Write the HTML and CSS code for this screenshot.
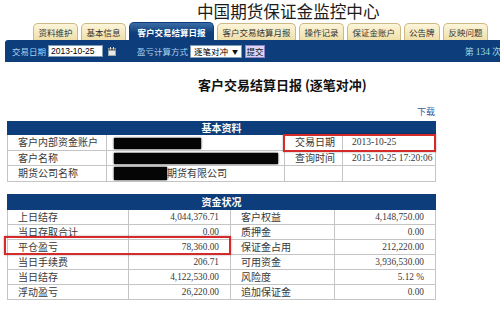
FILE: index.html
```html
<!DOCTYPE html>
<html lang="zh-CN">
<head>
<meta charset="utf-8">
<title>客户交易结算日报</title>
<link rel="stylesheet" href="styles.css">
</head>
<body>
<div class="page">
  <h1 class="site-title">中国期货保证金监控中心</h1>
  <ul class="tabs">
    <li class="tab">资料维护</li>
    <li class="tab">基本信息</li>
    <li class="tab active">客户交易结算日报</li>
    <li class="tab">客户交易结算月报</li>
    <li class="tab">操作记录</li>
    <li class="tab">保证金账户</li>
    <li class="tab">公告牌</li>
    <li class="tab">反映问题</li>
  </ul>
  <div class="toolbar">
    <span class="tb-label">交易日期</span>
    <span class="date-input">2013-10-25</span>
    <svg class="cal-icon" viewBox="0 0 8 9" width="8" height="9">
      <rect x="0.5" y="1.5" width="7" height="7" fill="#e8e8e8" stroke="#9aa" stroke-width="1"/>
      <rect x="0.5" y="1.5" width="7" height="2" fill="#555"/>
      <rect x="2" y="0" width="1" height="2.5" fill="#ddd"/>
      <rect x="5" y="0" width="1" height="2.5" fill="#ddd"/>
    </svg>
    <span class="tb-label mode">盈亏计算方式</span>
    <span class="select">逐笔对冲<span class="arrow">▼</span></span>
    <span class="btn">提交</span>
    <span class="count">第 <span class="num">134</span> 次</span>
  </div>

  <h2 class="report-title">客户交易结算日报 (逐笔对冲)</h2>
  <div class="download-row"><a class="download">下载</a></div>

  <div class="table-wrap first">
    <table class="data basic">
      <colgroup><col class="c1"><col class="c2"><col class="c3"><col class="c4"></colgroup>
      <tr class="head"><th colspan="4">基本资料</th></tr>
      <tr>
        <td class="label">客户内部资金账户</td>
        <td class="value"><span class="redact r1"></span></td>
        <td class="label">交易日期</td>
        <td class="value num">2013-10-25</td>
      </tr>
      <tr>
        <td class="label">客户名称</td>
        <td class="value"><span class="redact r2"></span></td>
        <td class="label">查询时间</td>
        <td class="value num">2013-10-25 17:20:06</td>
      </tr>
      <tr>
        <td class="label">期货公司名称</td>
        <td class="value"><span class="redact r3"></span><span class="cn">期货有限公司</span></td>
        <td class="label"></td>
        <td class="value"></td>
      </tr>
    </table>
    <div class="highlight hl1"></div>
  </div>

  <div class="table-wrap second">
    <table class="data funds">
      <colgroup><col class="d1"><col class="d2"><col class="d3"><col class="d4"></colgroup>
      <tr class="head"><th colspan="4">资金状况</th></tr>
      <tr><td class="label">上日结存</td><td class="amount">4,044,376.71</td><td class="label">客户权益</td><td class="amount">4,148,750.00</td></tr>
      <tr><td class="label">当日存取合计</td><td class="amount">0.00</td><td class="label">质押金</td><td class="amount">0.00</td></tr>
      <tr><td class="label">平仓盈亏</td><td class="amount">78,360.00</td><td class="label">保证金占用</td><td class="amount">212,220.00</td></tr>
      <tr><td class="label">当日手续费</td><td class="amount">206.71</td><td class="label">可用资金</td><td class="amount">3,936,530.00</td></tr>
      <tr><td class="label">当日结存</td><td class="amount">4,122,530.00</td><td class="label">风险度</td><td class="amount">5.12 %</td></tr>
      <tr><td class="label">浮动盈亏</td><td class="amount">26,220.00</td><td class="label">追加保证金</td><td class="amount">0.00</td></tr>
    </table>
    <div class="highlight hl2"></div>
  </div>
</div>
</body>
</html>
```
FILE: styles.css
```css
* { box-sizing: border-box; }
html, body { margin: 0; padding: 0; background: #fff; }
body {
  width: 500px;
  height: 311px;
  overflow: hidden;
  font-family: "Noto Sans CJK SC", "Liberation Sans", sans-serif;
  color: #222;
}
.page { width: 520px; }

.site-title {
  margin: 0;
  height: 23px;
  padding: 1px 0 0 197px;
  font-size: 16.6px;
  line-height: 20px;
  font-weight: normal;
  color: #1b1b1b;
}

.tabs {
  display: flex;
  align-items: flex-end;
  gap: 3px;
  height: 17px;
  margin: 0 0 0 33px;
  padding: 0;
  list-style: none;
}
.tab {
  height: 17px;
  padding: 0 4.5px;
  font-size: 8.5px;
  line-height: 16px;
  color: #333;
  background: linear-gradient(#fcf5da, #efdfa9);
  border: 1px solid #cdb985;
  border-bottom: none;
  border-radius: 5px 5px 0 0;
  white-space: nowrap;
}
.tab.active {
  height: 18px;
  padding: 0 7.5px;
  line-height: 18px;
  color: #fff;
  font-weight: bold;
  background: linear-gradient(#3a6da6, #0d3d7a 60%);
  border-color: #0d3d7a;
}

.toolbar {
  display: flex;
  align-items: center;
  width: 500px;
  height: 22px;
  margin-left: 5px;
  padding: 0 4px 0 7px;
  background: #0d3d7a;
  border-radius: 3px 0 0 0;
  font-size: 8.5px;
  white-space: nowrap;
}
.tb-label { color: #a6d2f4; }
.date-input {
  width: 55px;
  height: 12px;
  margin-left: 2px;
  padding-left: 2px;
  background: #fff;
  border: 1px solid #7f9db9;
  color: #000;
  font-family: "Liberation Sans", sans-serif;
  font-size: 8.5px;
  line-height: 10px;
}
.cal-icon { margin-left: 5px; }
.mode { margin-left: 21px; }
.select {
  display: flex;
  justify-content: space-between;
  align-items: center;
  width: 52px;
  height: 13px;
  margin-left: 2px;
  padding: 0 3px 0 3px;
  background: #fff;
  border: 1px solid #7f9db9;
  color: #000;
  font-size: 8.5px;
}
.select .arrow { font-size: 6px; color: #111; }
.btn {
  width: 20px;
  height: 13px;
  margin-left: 3px;
  background: #dcd5f5;
  border: 1px solid #8c82c4;
  color: #111;
  text-align: center;
  font-size: 8.5px;
  line-height: 11px;
}
.count {
  margin-left: auto;
  color: #9adbe3;
  font-size: 9px;
}
.count .num { font-family: "Liberation Serif", serif; font-size: 9.5px; }

.report-title {
  margin: 14px 0 0 0;
  padding-left: 198px;
  font-size: 13px;
  line-height: 18px;
  font-weight: bold;
  color: #111;
}

.download-row {
  width: 435px;
  margin-top: 12px;
  text-align: right;
  font-size: 9px;
  line-height: 12px;
}
.download { color: #2f5fa6; }

.table-wrap {
  position: relative;
  width: 428px;
  margin-left: 7px;
}
.table-wrap.first { margin-top: 3px; }
.table-wrap.second { margin-top: 12px; }

.data {
  width: 428px;
  border-collapse: collapse;
  table-layout: fixed;
}
.data td, .data th {
  border: 1px solid #c4c4c4;
  padding: 0;
  white-space: nowrap;
  overflow: hidden;
}
.data th {
  background: #0d3d7a;
  color: #fff;
  font-size: 10px;
  font-weight: bold;
  border-color: #0d3d7a;
}
.basic .head th { height: 12px; line-height: 12px; }
.funds .head th { height: 14px; line-height: 14px; }

.basic col.c1 { width: 99px; }
.basic col.c2 { width: 178px; }
.basic col.c3 { width: 58px; }
.basic col.c4 { width: 93px; }
.funds col.d1 { width: 121px; }
.funds col.d2 { width: 102px; }
.funds col.d3 { width: 104px; }
.funds col.d4 { width: 101px; }

.basic td { height: 15.5px; }
.funds td { height: 15px; }

.label {
  padding-left: 10px !important;
  font-size: 10px;
  line-height: 12px;
  color: #383838;
}
.value {
  padding-left: 9px !important;
  font-size: 10px;
  line-height: 12px;
  color: #383838;
}
.value.num { font-family: "Liberation Serif", serif; font-size: 9.5px; }
.value .cn { font-size: 10px; vertical-align: middle; }
.amount {
  padding-right: 11px !important;
  text-align: right;
  font-family: "Liberation Serif", serif;
  font-size: 9.3px;
  color: #383838;
}

.redact {
  display: inline-block;
  vertical-align: middle;
  margin-left: -2px;
  background: #050505;
  box-shadow: 0 0 2px #000;
}
.redact.r1 { width: 87px; height: 11px; margin-top: 3px; }
.redact.r2 { width: 164px; height: 11px; }
.redact.r3 { width: 53px; height: 13px; }

.highlight {
  position: absolute;
  border: 2.5px solid #d42a2a;
  box-shadow: 0 0 2px rgba(0, 0, 0, 0.35);
}
.hl1 { left: 276px; top: 13px; width: 153px; height: 18px; }
.hl2 { left: -3px; top: 42px; width: 227px; height: 19px; }
```
